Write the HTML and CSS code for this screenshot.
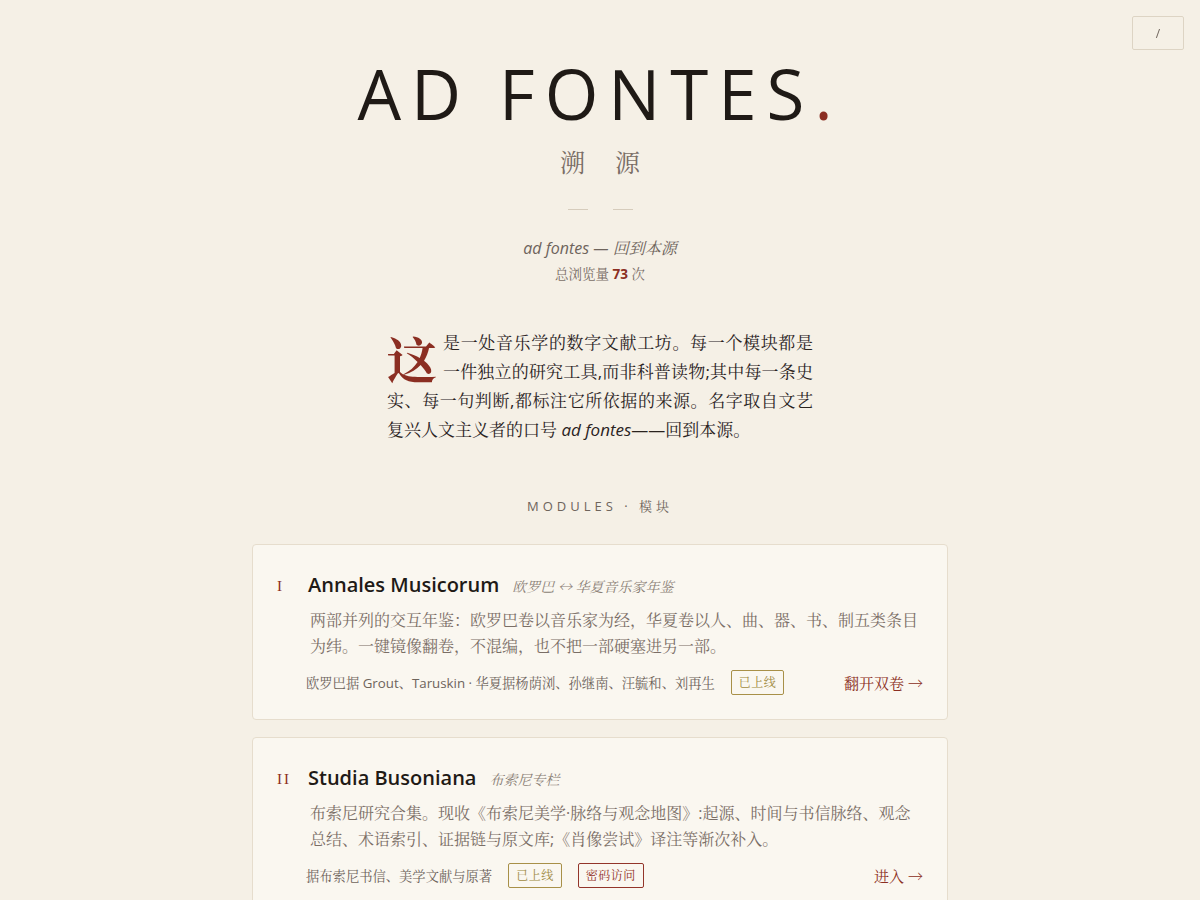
FILE: index.html
```html
<!DOCTYPE html>
<html lang="zh">
<head>
<meta charset="utf-8">
<title>Ad Fontes · 溯源</title>
<link rel="stylesheet" href="styles.css">
</head>
<body>
<button class="corner">/</button>
<main class="page">
  <header class="hero">
    <h1 class="title">AD FONTES<span class="dot">.</span></h1>
    <div class="subtitle">溯源</div>
    <div class="rule"><span></span><span></span></div>
    <div class="motto">ad fontes — 回到本源</div>
    <div class="views">总浏览量 <b>73</b> 次</div>
  </header>

  <p class="intro"><span class="drop">这</span>是一处音乐学的数字文献工坊。每一个模块都是一件独立的研究工具,而非科普读物;其中每一条史实、每一句判断,都标注它所依据的来源。名字取自文艺复兴人文主义者的口号 <i>ad fontes</i>——回到本源。</p>

  <h2 class="section">MODULES · 模块</h2>

  <section class="modules">
    <article class="card">
      <div class="num">I</div>
      <div class="body">
        <div class="head"><span class="name">Annales Musicorum</span><span class="sub">欧罗巴 ↔ 华夏音乐家年鉴</span></div>
        <p class="desc">两部并列的交互年鉴：欧罗巴卷以音乐家为经，华夏卷以人、曲、器、书、制五类条目为纬。一键镜像翻卷，不混编，也不把一部硬塞进另一部。</p>
        <div class="meta">
          <span class="src">欧罗巴据 Grout、Taruskin · 华夏据杨荫浏、孙继南、汪毓和、刘再生</span>
          <span class="badge live">已上线</span>
          <a class="go" href="#">翻开双卷 →</a>
        </div>
      </div>
    </article>
    <article class="card">
      <div class="num">II</div>
      <div class="body">
        <div class="head"><span class="name">Studia Busoniana</span><span class="sub">布索尼专栏</span></div>
        <p class="desc">布索尼研究合集。现收《布索尼美学·脉络与观念地图》:起源、时间与书信脉络、观念总结、术语索引、证据链与原文库;《肖像尝试》译注等渐次补入。</p>
        <div class="meta">
          <span class="src">据布索尼书信、美学文献与原著</span>
          <span class="badge live">已上线</span>
          <span class="badge lock">密码访问</span>
          <a class="go" href="#">进入 →</a>
        </div>
      </div>
    </article>
  </section>
</main>
</body>
</html>
```

FILE: styles.css
```css
* { box-sizing: border-box; }
html, body { margin: 0; padding: 0; }
body {
  background: #f5f0e6;
  color: #2a231e;
  font-family: "Open Sans", "Noto Serif CJK SC", "Noto Sans CJK SC", serif;
}
.corner {
  position: fixed;
  top: 16px;
  right: 16px;
  width: 52px;
  height: 34px;
  background: transparent;
  border: 1px solid #ddd4c4;
  border-radius: 2px;
  color: #6e645c;
  font-family: "Open Sans", sans-serif;
  font-size: 12px;
  padding: 0;
}
.page {
  width: 696px;
  margin: 0 auto;
  padding-top: 47px;
}
.hero { text-align: center; }
.title {
  margin: 0;
  font-weight: 400;
  font-size: 69px;
  line-height: 92px;
  letter-spacing: 10px;
  color: #1f1a16;
}
.title .dot { color: #8b2e22; }
.subtitle {
  margin-top: 5px;
  font-size: 25px;
  line-height: 34px;
  letter-spacing: 30px;
  padding-left: 30px;
  color: #7a6e66;
  font-family: "Noto Serif CJK SC", "Noto Sans CJK SC", serif;
}
.rule {
  display: flex;
  justify-content: center;
  gap: 25px;
  margin-top: 31px;
  height: 1px;
}
.rule span { width: 20px; height: 1px; background: #d6ccbc; }
.motto {
  margin-top: 26px;
  font-style: italic;
  font-size: 16px;
  line-height: 24px;
  color: #6e645c;
}
.views {
  margin-top: 4px;
  font-size: 13.5px;
  line-height: 20px;
  color: #7a6e66;
}
.views b { color: #8b2e22; font-weight: 700; }
.intro {
  width: 426px;
  margin: 44px auto 0;
  font-size: 17px;
  line-height: 29px;
  text-align: justify;
  color: #2a231e;
}
.drop {
  float: left;
  width: 50px;
  font-size: 50px;
  line-height: 52px;
  margin: 3px 6px 0 0;
  color: #8b2e22;
  font-weight: 700;
  font-family: "Noto Serif CJK SC", "Noto Sans CJK SC", serif;
}
.section {
  margin: 52px 0 0;
  text-align: center;
  font-weight: 400;
  font-size: 13px;
  line-height: 20px;
  letter-spacing: 4px;
  color: #6e645c;
}
.modules {
  margin-top: 28px;
  display: flex;
  flex-direction: column;
  gap: 17px;
}
.card {
  display: flex;
  background: #faf7f0;
  border: 1px solid #e6ddcd;
  border-radius: 4px;
  padding: 26px 24px 24px 24px;
}
.num {
  width: 31px;
  flex: none;
  font-family: "Liberation Serif", serif;
  font-size: 15px;
  line-height: 28px;
  color: #8b2e22;
  letter-spacing: 2px;
  padding-top: 1px;
}
.body { flex: 1; }
.head { display: flex; align-items: baseline; gap: 13px; }
.name {
  font-weight: 600;
  font-size: 20px;
  line-height: 28px;
  color: #1f1a16;
}
.sub {
  font-style: italic;
  font-size: 14px;
  color: #8a7f76;
}
.desc {
  margin: 8px 0 0 2px;
  font-size: 16px;
  line-height: 26px;
  color: #7a6e66;
}
.meta {
  display: flex;
  align-items: center;
  margin-top: 11px;
  margin-left: -2px;
  font-size: 13.3px;
  color: #6e645c;
}
.src { margin-right: 16px; }
.badge {
  font-size: 12px;
  line-height: 17px;
  padding: 3px 7px;
  border-radius: 2px;
  letter-spacing: 0.5px;
  margin-right: 16px;
}
.badge.live { border: 1px solid #a89048; color: #a08a40; }
.badge.lock { border: 1px solid #93352a; color: #93352a; }
.go {
  margin-left: auto;
  font-size: 15px;
  color: #8b2e22;
  text-decoration: none;
}
```
